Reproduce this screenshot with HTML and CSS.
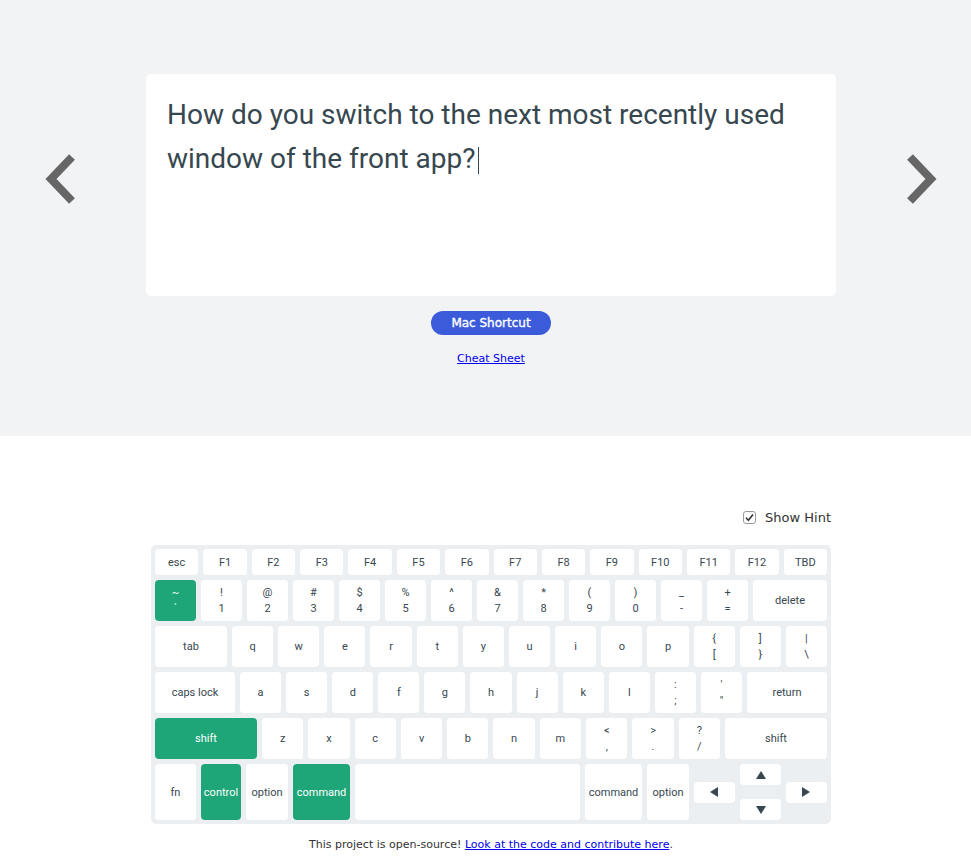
FILE: index.html
```html
<!DOCTYPE html>
<html lang="en">
<head>
<meta charset="utf-8">
<title>Mac Shortcut Quiz</title>
<link rel="stylesheet" href="styles.css">
</head>
<body>
<section class="top">
  <div class="stage">
    <svg class="nav" viewBox="0 0 32 52" width="32" height="52" aria-label="previous"><path d="M27 4 L6 26 L27 48" fill="none" stroke="#666" stroke-width="8" stroke-linejoin="miter"/></svg>
    <div class="card">How do you switch to the next most recently used window of the front app?<span class="caret"></span></div>
    <svg class="nav" viewBox="0 0 32 52" width="32" height="52" aria-label="next"><path d="M5 4 L26 26 L5 48" fill="none" stroke="#666" stroke-width="8" stroke-linejoin="miter"/></svg>
  </div>
  <div class="actions">
    <button class="btn">Mac Shortcut</button>
    <a class="cheat" href="#">Cheat Sheet</a>
  </div>
</section>
<section class="bottom">
  <div class="kb-wrap">
    <label class="hint"><span class="check"><svg viewBox="0 0 13 13" width="13" height="13"><path d="M3 6.8 L5.4 9.2 L10 3.6" fill="none" stroke="#333" stroke-width="1.6"/></svg></span>Show Hint</label>
    <div class="keyboard">
      <div class="row r1">
        <div class="key">esc</div><div class="key">F1</div><div class="key">F2</div><div class="key">F3</div><div class="key">F4</div><div class="key">F5</div><div class="key">F6</div><div class="key">F7</div><div class="key">F8</div><div class="key">F9</div><div class="key">F10</div><div class="key">F11</div><div class="key">F12</div><div class="key">TBD</div>
      </div>
      <div class="row r2">
        <div class="key dbl on"><span>~</span><span>`</span></div>
        <div class="key dbl"><span>!</span><span>1</span></div>
        <div class="key dbl"><span>@</span><span>2</span></div>
        <div class="key dbl"><span>#</span><span>3</span></div>
        <div class="key dbl"><span>$</span><span>4</span></div>
        <div class="key dbl"><span>%</span><span>5</span></div>
        <div class="key dbl"><span>^</span><span>6</span></div>
        <div class="key dbl"><span>&amp;</span><span>7</span></div>
        <div class="key dbl"><span>*</span><span>8</span></div>
        <div class="key dbl"><span>(</span><span>9</span></div>
        <div class="key dbl"><span>)</span><span>0</span></div>
        <div class="key dbl"><span>_</span><span>-</span></div>
        <div class="key dbl"><span>+</span><span>=</span></div>
        <div class="key w-delete">delete</div>
      </div>
      <div class="row r3">
        <div class="key w-tab">tab</div>
        <div class="key">q</div><div class="key">w</div><div class="key">e</div><div class="key">r</div><div class="key">t</div><div class="key">y</div><div class="key">u</div><div class="key">i</div><div class="key">o</div><div class="key">p</div>
        <div class="key dbl"><span>{</span><span>[</span></div>
        <div class="key dbl"><span>]</span><span>}</span></div>
        <div class="key dbl"><span>|</span><span>\</span></div>
      </div>
      <div class="row r4">
        <div class="key w-caps">caps lock</div>
        <div class="key">a</div><div class="key">s</div><div class="key">d</div><div class="key">f</div><div class="key">g</div><div class="key">h</div><div class="key">j</div><div class="key">k</div><div class="key">l</div>
        <div class="key dbl"><span>:</span><span>;</span></div>
        <div class="key dbl"><span>'</span><span>"</span></div>
        <div class="key w-caps">return</div>
      </div>
      <div class="row r5">
        <div class="key w-shift on">shift</div>
        <div class="key">z</div><div class="key">x</div><div class="key">c</div><div class="key">v</div><div class="key">b</div><div class="key">n</div><div class="key">m</div>
        <div class="key dbl"><span>&lt;</span><span>,</span></div>
        <div class="key dbl"><span>&gt;</span><span>.</span></div>
        <div class="key dbl"><span>?</span><span>/</span></div>
        <div class="key w-shift">shift</div>
      </div>
      <div class="row r6">
        <div class="key w-fn">fn</div>
        <div class="key w-ctrl on">control</div>
        <div class="key w-opt">option</div>
        <div class="key w-cmd on">command</div>
        <div class="key space"></div>
        <div class="key w-cmd">command</div>
        <div class="key w-opt">option</div>
        <div class="arrows">
          <div class="key a-left"><svg viewBox="0 0 9 10" width="9" height="10"><polygon points="8,0 8,10 0,5" fill="#37474f"/></svg></div>
          <div class="key a-up"><svg viewBox="0 0 10 8" width="10" height="8"><polygon points="0,8 10,8 5,0" fill="#37474f"/></svg></div>
          <div class="key a-down"><svg viewBox="0 0 10 8" width="10" height="8"><polygon points="0,0 10,0 5,8" fill="#37474f"/></svg></div>
          <div class="key a-right"><svg viewBox="0 0 9 10" width="9" height="10"><polygon points="0,0 0,10 8,5" fill="#37474f"/></svg></div>
        </div>
      </div>
    </div>
    <p class="footer">This project is open-source! <a href="#">Look at the code and contribute here</a>.</p>
  </div>
</section>
</body>
</html>
```

FILE: styles.css
```css
body {
  margin: 0;
  font-family: "DejaVu Sans", Verdana, sans-serif;
  background: #fff;
}

.top {
  background: #f2f3f5;
  height: 436px;
  box-sizing: border-box;
  padding-top: 74px;
  padding-left: 11px;
}

.stage {
  display: flex;
  justify-content: center;
  gap: 69px;
}

.nav {
  flex: none;
  width: 32px;
  height: 52px;
  margin-top: 79px;
}

.card {
  flex: none;
  width: 690px;
  height: 222px;
  box-sizing: border-box;
  background: #fff;
  border-radius: 5px;
  padding: 19px 21px;
  font-family: Roboto, "Noto Sans", sans-serif;
  font-size: 28px;
  line-height: 44px;
  color: #37474f;
}

.caret {
  display: inline-block;
  width: 1px;
  height: 27px;
  margin-left: 3px;
  vertical-align: -6px;
  background: #37474f;
}

.actions {
  display: flex;
  flex-direction: column;
  align-items: center;
}

.btn {
  margin-top: 15px;
  width: 120px;
  height: 24px;
  padding: 0;
  border: 0;
  border-radius: 12px;
  background: #3b5bdb;
  color: #fff;
  font-family: "DejaVu Sans", Verdana, sans-serif;
  font-size: 12px;
  font-weight: normal;
  -webkit-text-stroke: 0.35px #fff;
}

.cheat {
  margin-top: 17px;
  font-size: 11px;
  line-height: 13px;
  color: #0000ee;
  text-decoration: underline;
}

.bottom {
  padding-left: 11px;
}

.kb-wrap {
  width: 680px;
  margin: 0 auto;
  padding-top: 73px;
}

.hint {
  display: flex;
  justify-content: flex-end;
  align-items: center;
  gap: 9px;
  height: 16px;
  font-size: 13px;
  color: #333;
}

.check {
  display: flex;
  width: 13px;
  height: 13px;
  box-sizing: border-box;
  border: 1px solid #9a9a9a;
  border-radius: 3px;
  background: #fff;
  overflow: hidden;
}

.check svg {
  margin: -1px;
}

.keyboard {
  margin-top: 20px;
  background: #eceff1;
  border-radius: 5px;
  padding: 4px;
  display: flex;
  flex-direction: column;
  gap: 5px;
}

.row {
  display: flex;
  gap: 5px;
  height: 41px;
}

.r1 { height: 26px; }
.r6 { height: 56px; }

.key {
  flex: 1 1 0;
  min-width: 0;
  display: flex;
  align-items: center;
  justify-content: center;
  background: #fff;
  border-radius: 4px;
  font-family: Roboto, "Noto Sans", sans-serif;
  font-size: 11px;
  color: #37474f;
  white-space: nowrap;
}

.key.on {
  background: #1ea678;
  color: #fff;
}

.dbl {
  flex-direction: column;
  line-height: 16px;
}

.w-delete { flex: 0 0 74px; }
.w-tab { flex: 0 0 72px; }
.w-caps { flex: 0 0 80px; }
.w-shift { flex: 0 0 102px; }
.w-fn { flex: 0 0 41px; }
.w-ctrl { flex: 0 0 40px; }
.w-opt { flex: 0 0 42px; }
.w-cmd { flex: 0 0 57px; }
.space { flex: 1 1 0; }

.arrows {
  flex: 0 0 133px;
  display: grid;
  grid-template-columns: 41px 41px 41px;
  grid-template-rows: 21px 21px;
  column-gap: 5px;
  row-gap: 14px;
}

.a-left {
  grid-column: 1;
  grid-row: 1 / 3;
  align-self: center;
  height: 21px;
}

.a-up { grid-column: 2; grid-row: 1; }
.a-down { grid-column: 2; grid-row: 2; }

.a-right {
  grid-column: 3;
  grid-row: 1 / 3;
  align-self: center;
  height: 21px;
}

.footer {
  margin: 14px 0 0;
  text-align: center;
  font-size: 11px;
  line-height: 13px;
  color: #333;
}

.footer a {
  color: #0000ee;
}
```
